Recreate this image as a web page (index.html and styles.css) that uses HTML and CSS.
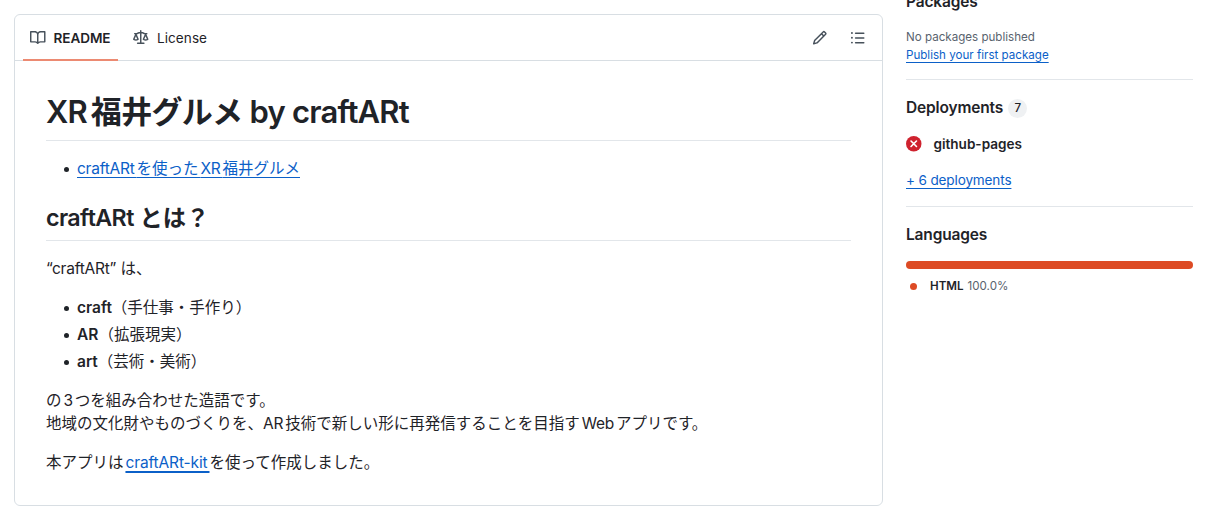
FILE: index.html
```
<!DOCTYPE html>
<html lang="ja">
<head>
	<meta charset="utf-8">
	<title>XR福井グルメ by craftARt</title>
	<link rel="stylesheet" href="styles.css">
</head>
<body>
	<div class="layout">
		<main class="readme">
			<div class="tabs">
				<a class="tab selected">
					<svg class="icon" viewBox="0 0 16 16"><path d="M0 1.75A.75.75 0 0 1 .75 1h4.253c1.227 0 2.317.59 3 1.501A3.743 3.743 0 0 1 11.006 1h4.245a.75.75 0 0 1 .75.75v10.5a.75.75 0 0 1-.75.75h-4.507a2.25 2.25 0 0 0-1.591.659l-.622.621a.75.75 0 0 1-1.06 0l-.622-.621A2.25 2.25 0 0 0 5.258 13H.75a.75.75 0 0 1-.75-.75Zm7.251 10.324.004-5.073-.002-2.253A2.25 2.25 0 0 0 5.003 2.5H1.5v9h3.757a3.75 3.75 0 0 1 1.994.574ZM8.755 4.75l-.004 7.322a3.752 3.752 0 0 1 1.992-.572H14.5v-9h-3.495a2.25 2.25 0 0 0-2.25 2.25Z"/></svg>
					<span class="tab-readme">README</span>
				</a>
				<a class="tab">
					<svg class="icon" viewBox="0 0 16 16"><path d="M8.75.75V2h.985c.304 0 .603.08.867.231l1.29.736c.038.022.08.033.124.033h2.234a.75.75 0 0 1 0 1.5h-.427l2.111 4.692a.75.75 0 0 1-.154.838l-.53-.53.529.531-.001.002-.002.002-.006.006-.006.005-.01.01-.045.04c-.21.176-.441.327-.686.45C14.556 10.78 13.88 11 13 11a4.498 4.498 0 0 1-2.023-.454 3.544 3.544 0 0 1-.686-.45l-.045-.04-.016-.015-.006-.006-.004-.004v-.001a.75.75 0 0 1-.154-.838L12.178 4.5h-.162c-.305 0-.604-.079-.868-.231l-1.29-.736a.245.245 0 0 0-.124-.033H8.75V13h2.5a.75.75 0 0 1 0 1.5h-6.5a.75.75 0 0 1 0-1.5h2.5V3.5h-.984a.245.245 0 0 0-.124.033l-1.289.737c-.265.15-.564.23-.869.23h-.162l2.112 4.692a.75.75 0 0 1-.154.838l-.53-.53.529.531-.001.002-.002.002-.006.006-.016.015-.045.04c-.21.176-.441.327-.686.45C4.556 10.78 3.88 11 3 11a4.498 4.498 0 0 1-2.023-.454 3.544 3.544 0 0 1-.686-.45l-.045-.04-.016-.015-.006-.006-.004-.004v-.001a.75.75 0 0 1-.154-.838L2.178 4.5H1.75a.75.75 0 0 1 0-1.5h2.234a.249.249 0 0 0 .125-.033l1.288-.737c.265-.15.564-.23.869-.23h.984V.75a.75.75 0 0 1 1.5 0Zm2.945 8.477c.285.135.718.273 1.305.273s1.02-.138 1.305-.273L13 6.327Zm-10 0c.285.135.718.273 1.305.273s1.02-.138 1.305-.273L3 6.327Z"/></svg>
					<span class="tab-license">License</span>
				</a>
				<div class="tools">
					<svg class="icon" viewBox="0 0 16 16"><path d="M11.013 1.427a1.75 1.75 0 0 1 2.474 0l1.086 1.086a1.75 1.75 0 0 1 0 2.474l-8.61 8.61c-.21.21-.47.364-.756.445l-3.251.93a.75.75 0 0 1-.927-.928l.929-3.25c.081-.286.235-.547.445-.758l8.61-8.61Zm.176 4.823L9.75 4.81l-6.286 6.287a.253.253 0 0 0-.064.108l-.558 1.953 1.953-.558a.253.253 0 0 0 .108-.064Zm1.238-3.763a.25.25 0 0 0-.354 0L10.811 3.75l1.439 1.44 1.263-1.263a.25.25 0 0 0 0-.354Z"/></svg>
					<svg class="icon" viewBox="0 0 16 16"><path d="M5.75 2.5h8.5a.75.75 0 0 1 0 1.5h-8.5a.75.75 0 0 1 0-1.5Zm0 5h8.5a.75.75 0 0 1 0 1.5h-8.5a.75.75 0 0 1 0-1.5Zm0 5h8.5a.75.75 0 0 1 0 1.5h-8.5a.75.75 0 0 1 0-1.5ZM2 14a1 1 0 1 1 0-2 1 1 0 0 1 0 2Zm1-6a1 1 0 1 1-2 0 1 1 0 0 1 2 0ZM2 4a1 1 0 1 1 0-2 1 1 0 0 1 0 2Z"/></svg>
				</div>
			</div>
			<article class="content">
				<h1><span class="en">XR</span>福井グルメ <span class="en">by craftARt</span></h1>
				<ul>
					<li><a class="link"><span class="en">craftARt</span>を使った<span class="en">XR</span>福井グルメ</a></li>
				</ul>
				<h2><span class="en">craftARt</span> とは？</h2>
				<p><span class="en">“craftARt”</span> は、</p>
				<ul>
					<li><strong>craft</strong>（手仕事・手作り）</li>
					<li><strong>AR</strong>（拡張現実）</li>
					<li><strong>art</strong>（芸術・美術）</li>
				</ul>
				<p>の<span class="en">3</span>つを組み合わせた造語です。<br>
				地域の文化財やものづくりを、<span class="en">AR</span>技術で新しい形に再発信することを目指す<span class="en">Web</span>アプリです。</p>
				<p>本アプリは<a class="link kit">craftARt-kit</a>を使って作成しました。</p>
			</article>
		</main>
		<aside class="sidebar">
			<section class="packages">
				<h3>Packages</h3>
				<div class="muted">No packages published</div>
				<div class="muted"><a class="link">Publish your first package</a></div>
			</section>
			<section class="deployments">
				<h3>Deployments <span class="counter">7</span></h3>
				<div class="deploy">
					<svg class="icon failed" viewBox="0 0 16 16"><circle cx="8" cy="8" r="8"/><path d="M5.2 5.2l5.6 5.6M10.8 5.2l-5.6 5.6"/></svg>
					<b>github-pages</b>
				</div>
				<a class="link more">+ 6 deployments</a>
			</section>
			<section class="languages">
				<h3>Languages</h3>
				<div class="bar"></div>
				<div class="lang"><i class="dot"></i><b>HTML</b><span>100.0%</span></div>
			</section>
		</aside>
	</div>
</body>
</html>
```
FILE: styles.css
```
html{
	overflow: hidden;
}
body{
	margin: 0;
	background: #fff;
	color: #1f2328;
	font-family: Inter, "Noto Sans CJK JP", sans-serif;
	font-size: 15.5px;
	line-height: 1.5;
}
.layout{
	display: flex;
	align-items: flex-start;
	gap: 23px;
	height: 526px;
	padding-left: 14px;
	box-sizing: border-box;
	overflow: hidden;
}
.icon{
	width: 15.5px;
	height: 15.5px;
	fill: #47515b;
	flex: none;
}

/* readme box */
.readme{
	width: 869px;
	height: 492px;
	margin-top: 14px;
	box-sizing: border-box;
	border: 1px solid #d8dee3;
	border-radius: 6px;
}
.tabs{
	display: flex;
	gap: 8px;
	height: 46px;
	padding: 0 17px 0 8px;
	box-sizing: border-box;
	border-bottom: 1px solid #d8dee3;
	font-size: 13.56px;
}
.tab{
	display: flex;
	align-items: center;
	gap: 8px;
	height: 46px;
	padding: 2px 8px 0 7px;
	box-sizing: border-box;
	border-bottom: 2px solid transparent;
}
.selected{
	border-color: #ec8a72;
	font-weight: 600;
}
.tab-readme{
	letter-spacing: -.005em;
}
.tab-license{
	letter-spacing: .005em;
}
.tools{
	display: flex;
	align-items: center;
	gap: 22px;
	margin-left: auto;
}
.content{
	padding: 32px 31px 31px;
	text-autospace: normal;
}
h1, h2{
	margin: 0 0 16.25px;
	padding-bottom: 8px;
	border-bottom: 1px solid #e2e6ea;
	font-weight: 600;
	line-height: 1.25;
}
h1{
	font-size: 31px;
	letter-spacing: -.022em;
}
h2{
	margin-top: 22.5px;
	font-size: 23.25px;
}
.content p, .content ul{
	margin: 0 0 15.5px;
}
.content ul{
	padding-left: 31px;
	list-style: none;
}
li::before{
	content: "";
	display: inline-block;
	width: 5px;
	height: 5px;
	margin: 0 8px 1px -13px;
	border-radius: 50%;
	background: #1f2328;
	vertical-align: middle;
}
li + li{
	margin-top: .25em;
}
strong, b{
	font-weight: 600;
}
.en{
	letter-spacing: -.015em;
}
h1 .en, h2 .en{
	letter-spacing: -.026em;
}
.link{
	color: #0b60c8;
	text-decoration: underline;
	text-decoration-thickness: 1px;
	text-underline-offset: 3px;
}
.kit{
	letter-spacing: -.008em;
	text-decoration-thickness: 1.5px;
}

/* right column */
.sidebar{
	width: 287px;
}
.sidebar section{
	border-bottom: 1px solid #e2e6ea;
	box-sizing: border-box;
}
.sidebar .languages{
	border-bottom: 0;
}
h3{
	display: flex;
	align-items: center;
	gap: 5px;
	margin: 0;
	font-size: 15.5px;
	font-weight: 600;
	letter-spacing: -.01em;
	line-height: 24px;
}
.packages{
	height: 90px;
}
.packages h3{
	margin: -10px 0 14px;
}
.muted{
	color: #59636e;
	font-size: 11.6px;
	line-height: 18px;
}
.deployments{
	height: 127px;
	padding-top: 16px;
}
.counter{
	width: 19px;
	height: 19px;
	border-radius: 10px;
	background: #eff1f3;
	font-size: 11.6px;
	font-weight: 500;
	line-height: 19px;
	text-align: center;
}
.deploy{
	display: flex;
	align-items: center;
	gap: 12px;
	margin: 14px 0 16px;
	font-size: 13.56px;
	line-height: 20px;
}
.failed{
	fill: #cf222e;
	stroke: #fff;
	stroke-width: 1.7;
	stroke-linecap: round;
}
.failed circle{
	stroke: none;
}
.more{
	display: block;
	font-size: 13.56px;
	letter-spacing: -.01em;
	line-height: 21px;
}
.languages{
	padding-top: 16px;
}
.bar{
	height: 8px;
	margin: 14px 0 8px;
	border-radius: 6px;
	background: #dd4b25;
}
.lang{
	display: flex;
	align-items: center;
	gap: 4px;
	padding-left: 4px;
	font-size: 11.6px;
	line-height: 18px;
}
.lang span{
	color: #59636e;
}
.dot{
	width: 7px;
	height: 7px;
	margin-right: 9px;
	border-radius: 50%;
	background: #dd4b25;
}
```
